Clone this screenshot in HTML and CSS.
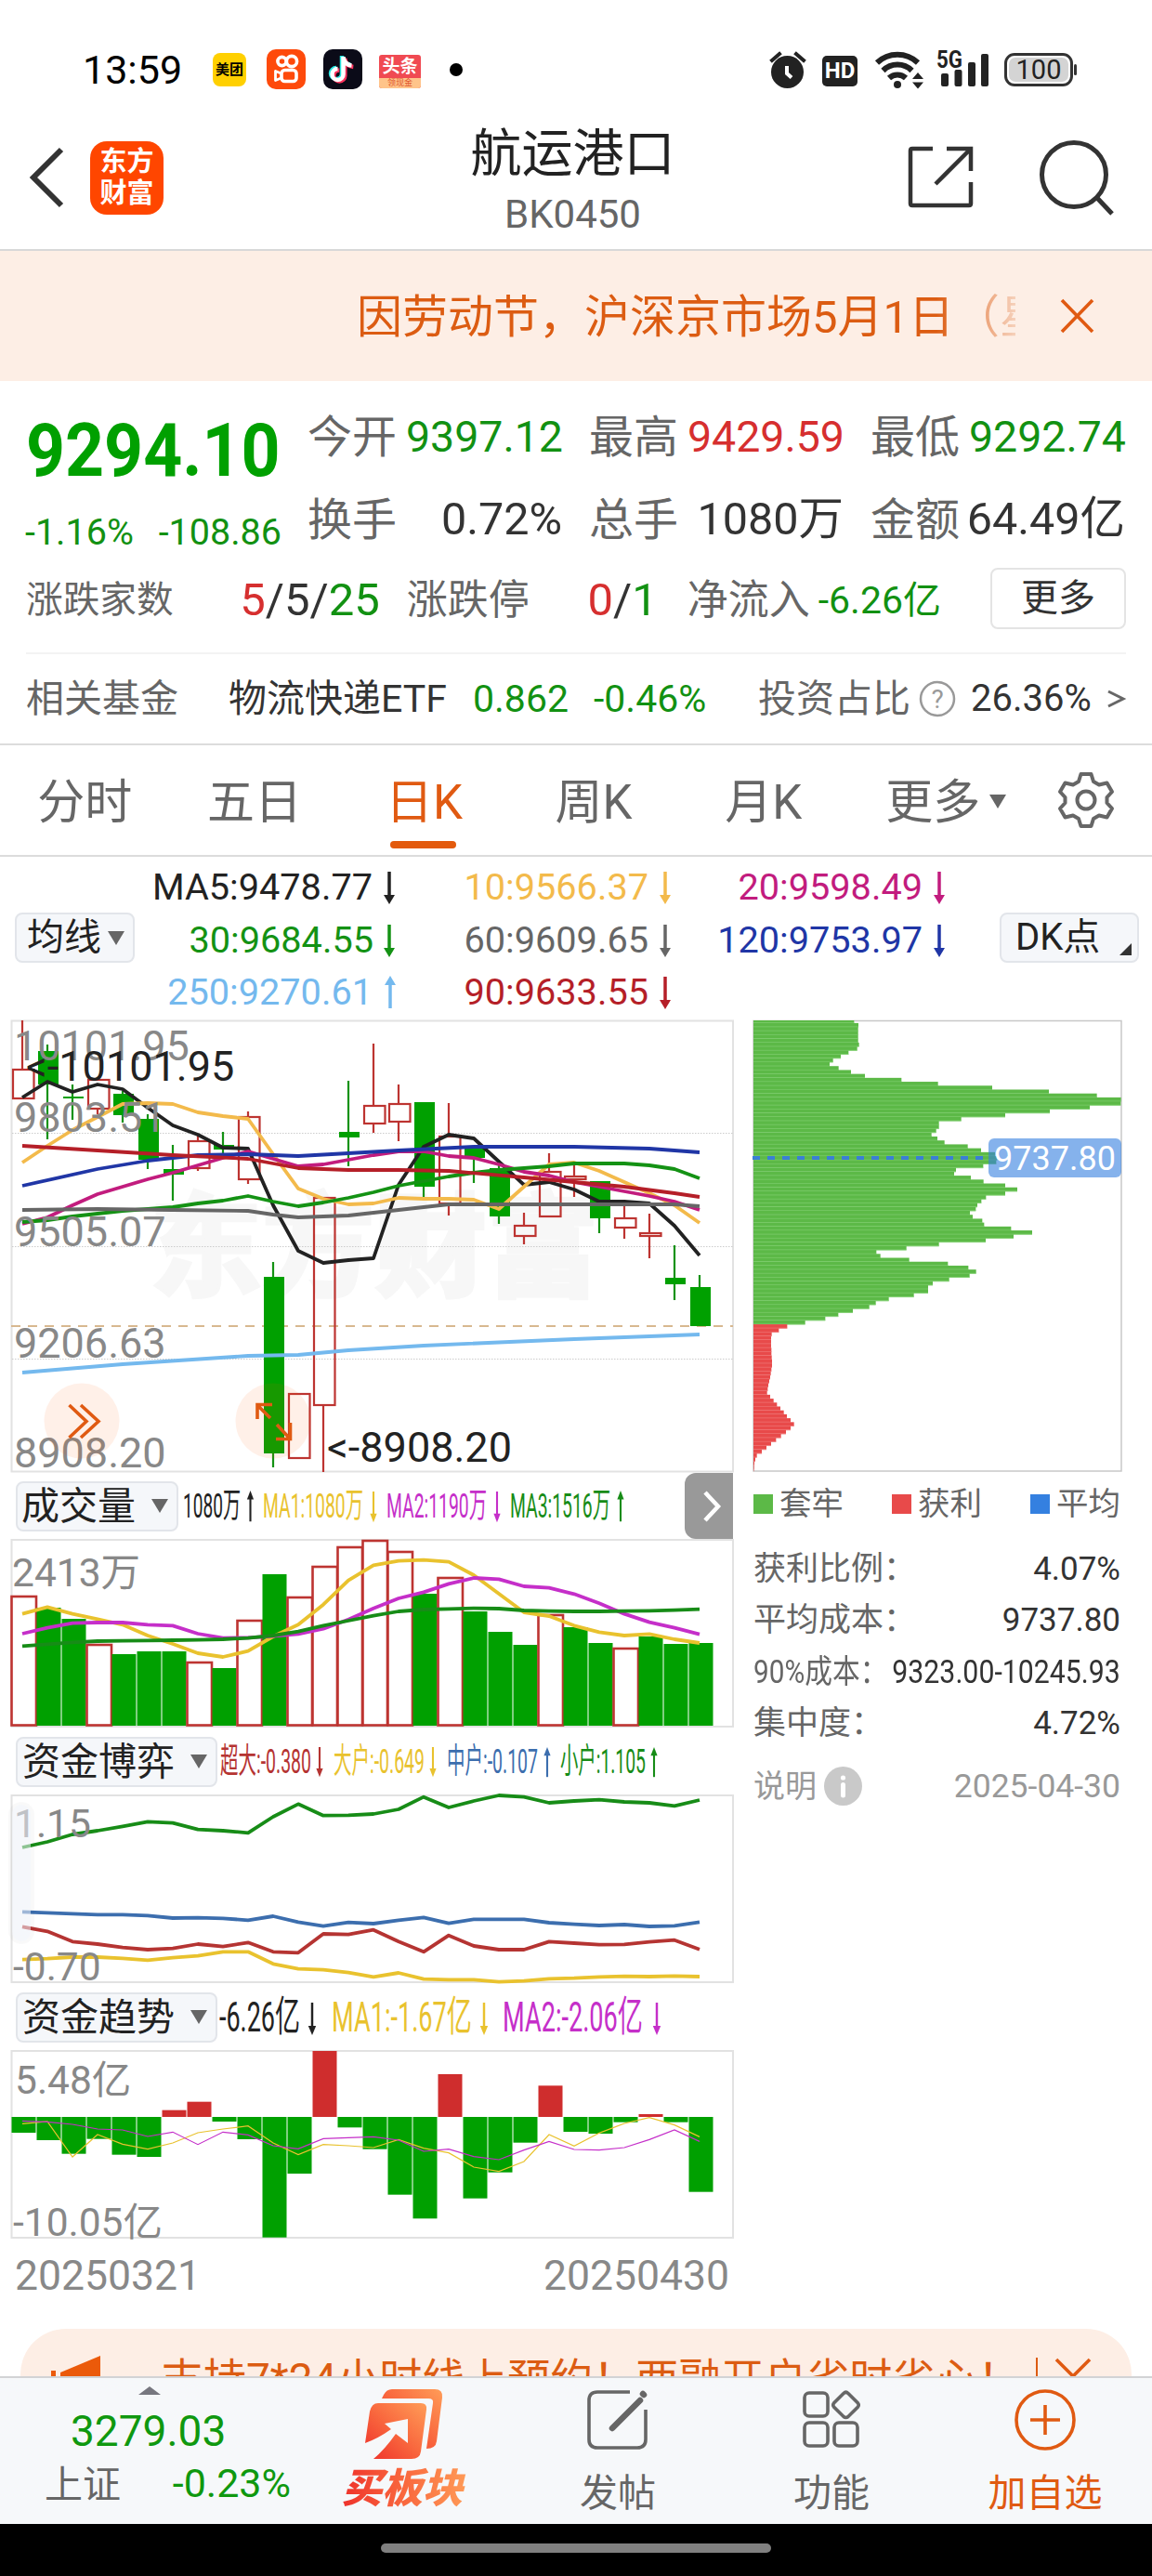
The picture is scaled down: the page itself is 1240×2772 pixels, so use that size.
FILE: index.html
```html
<!DOCTYPE html>
<html lang="zh-CN">
<head>
<meta charset="utf-8">
<title>航运港口 BK0450</title>
<link rel="stylesheet" href="styles.css">
</head>
<body>
<div class="statusbar">
  <span class="clock">13:59</span>
  <span class="app meituan">美团</span>
  <svg class="app-kuaishou" width="42" height="43" viewBox="0 0 42 43"><rect width="42" height="43" rx="10" fill="#fe4a0b"/><g fill="none" stroke="#fff" stroke-width="3.600"><circle cx="16.500" cy="13" r="4.600"/><circle cx="27" cy="13" r="5.600"/><rect x="16" y="22.500" width="16" height="12" rx="3.500"/><path d="M15.500 26l-6-2.500v10l6-2.500" stroke-linejoin="round" stroke-width="2.800"/></g></svg>
  <svg class="app-douyin" width="42" height="43" viewBox="0 0 42 43"><rect width="42" height="43" rx="10" fill="#0b0b18"/><g fill="none" stroke-width="4.500"><path d="M21.500 8v19a6 6 0 1 1-6-6M21.500 9c1 5 4 8 9 8.500" stroke="#25e5e0" transform="translate(-1.500 -1)"/><path d="M21.500 8v19a6 6 0 1 1-6-6M21.500 9c1 5 4 8 9 8.500" stroke="#f9315c" transform="translate(1.800 1.500)"/><path d="M21.500 8v19a6 6 0 1 1-6-6M21.500 9c1 5 4 8 9 8.500" stroke="#fff"/></g></svg>
  <span class="app toutiao"><b>头条</b><i>领现金</i></span>
  <span class="dot"></span>
  <span class="grow"></span>
  <svg width="38" height="42" viewBox="0 0 38 42"><circle cx="18.500" cy="23.500" r="17.500" fill="#222"/><path d="M2 11l8-7M36 11l-8-7" stroke="#222" stroke-width="4" stroke-linecap="square"/><path d="M18 17v8l5 4.500" fill="none" stroke="#fff" stroke-width="4"/></svg>
  <span class="hd">HD</span>
  <svg class="wifi" width="54" height="42" viewBox="0 0 54 42"><g fill="none" stroke="#222" stroke-width="6"><path d="M2 13.500a32 32 0 0 1 44 0"/><path d="M8.500 22a22 22 0 0 1 31 0"/><path d="M15 30a13 13 0 0 1 18 0"/></g><circle cx="24" cy="37" r="4" fill="#222"/><path d="M40 31h12l-6-7zM40 34.500h12l-6 7z" fill="#222"/></svg>
  <svg class="signal" width="56" height="42" viewBox="0 0 56 42"><text x="-1" y="19" class="g5" textLength="28" lengthAdjust="spacingAndGlyphs">5G</text><g fill="#222"><rect x="4" y="25" width="8" height="14" rx="2"/><rect x="18.500" y="21" width="8" height="18" rx="2"/><rect x="33" y="13" width="8" height="26" rx="2"/><rect x="47" y="4" width="8" height="35" rx="2"/></g></svg>
  <span class="battery"><em>100</em></span>
</div>

<header class="topbar">
  <svg class="back" width="40" height="66" viewBox="0 0 40 66"><path d="M36 3L6 33l30 30" fill="none" stroke="#333" stroke-width="6"/></svg>
  <span class="logo">东方<br>财富</span>
  <div class="title"><h1>航运港口</h1><p>BK0450</p></div>
  <svg class="share" width="72" height="72" viewBox="0 0 72 72"><g fill="none" stroke="#333" stroke-width="4.500"><path d="M28 5H6q-2 0-2 2v57q0 2 2 2h61q2 0 2-2V41"/><path d="M43 5h26v24M69 5L31 43"/></g></svg>
  <svg width="82" height="82" viewBox="0 0 82 82"><g fill="none" stroke="#333" stroke-width="5"><circle cx="37" cy="38" r="34.500"/><path d="M61 62l17 18"/></g></svg>
</header>

<div class="notice">
  <span class="notice-text">因劳动节，沪深京市场5月1日（星</span>
  <svg width="38" height="38" viewBox="0 0 38 38"><path d="M2 2l33 34M35 2L2 36" stroke="#e05a12" stroke-width="3.600"/></svg>
</div>

<section class="quote">
  <div class="quote-top">
    <div class="price">
      <strong>9294.10</strong>
      <p><span>-1.16%</span><span>-108.86</span></p>
    </div>
    <dl class="stats">
      <div><dt>今开</dt><dd class="down">9397.12</dd></div>
      <div><dt>最高</dt><dd class="up">9429.59</dd></div>
      <div><dt>最低</dt><dd class="down">9292.74</dd></div>
      <div class="second"><dt>换手</dt><dd>0.72%</dd></div>
      <div class="second"><dt>总手</dt><dd>1080万</dd></div>
      <div class="second"><dt>金额</dt><dd>64.49亿</dd></div>
    </dl>
  </div>
  <div class="breadth">
    <span class="k4">涨跌家数</span><span class="n n1"><i class="up">5</i>/5/<i class="down">25</i></span>
    <span class="k3">涨跌停</span><span class="n n2"><i class="up">0</i>/<i class="down">1</i></span>
    <span class="k3">净流入</span><span class="flow down">-6.26亿</span>
    <button class="more">更多</button>
  </div>
  <div class="fund">
    <span class="muted">相关基金</span><span class="etf">物流快递ETF</span><span class="down nav">0.862</span><span class="down chg">-0.46%</span>
    <span class="muted">投资占比</span>
    <svg width="40" height="40" viewBox="0 0 40 40"><circle cx="20" cy="20" r="18" fill="none" stroke="#999" stroke-width="2.500"/><text x="20" y="29.500" text-anchor="middle" class="q">?</text></svg>
    <span class="ratio">26.36%</span>
    <svg width="20" height="22" viewBox="0 0 20 22"><path d="M1 3l16 8-16 8" fill="none" stroke="#666" stroke-width="3"/></svg>
  </div>
</section>

<nav class="tabs">
  <a>分时</a><a>五日</a><a class="active">日K</a><a>周K</a><a>月K</a><a>更多<i class="caret"></i></a>
  <svg width="62" height="62" viewBox="0 0 62 62"><g fill="none" stroke="#666" stroke-width="4" stroke-linejoin="round"><path d="M25.500 3h11l2.500 8 6 3.500 8.500-2L59 22l-5.500 6v6l5.500 6-5.500 9.500-8.500-2-6 3.500-2.500 8h-11l-2.500-8-6-3.500-8.500 2L3 40l5.500-6v-6L3 22l5.500-9.500 8.500 2 6-3.500z"/><circle cx="31" cy="31" r="9.500"/></g></svg>
</nav>

<section class="averages">
  <button class="pill">均线<i class="caret"></i></button>
  <svg class="ma-legend" width="860" height="168" viewBox="160 925 860 168">
    <defs>
      <g id="dn"><path d="M0 0v27" stroke="currentColor" stroke-width="3.500"/><path d="M-6 25h12l-6 10z" fill="currentColor"/></g>
      <g id="upw"><path d="M0 8v27" stroke="currentColor" stroke-width="3.500"/><path d="M-6 10h12L0 0z" fill="currentColor"/></g>
    </defs>
    <g class="ma">
      <g class="c-ma5"><text x="401" y="968">MA5:9478.77</text><use href="#dn" x="419" y="938"/></g>
      <g class="c-ma10"><text x="698" y="968">10:9566.37</text><use href="#dn" x="716" y="938"/></g>
      <g class="c-ma20"><text x="993" y="968">20:9598.49</text><use href="#dn" x="1011" y="938"/></g>
      <g class="c-ma30"><text x="402" y="1025">30:9684.55</text><use href="#dn" x="419" y="995"/></g>
      <g class="c-ma60"><text x="698" y="1025">60:9609.65</text><use href="#dn" x="716" y="995"/></g>
      <g class="c-ma120"><text x="993" y="1025">120:9753.97</text><use href="#dn" x="1011" y="995"/></g>
      <g class="c-ma250"><text x="401" y="1081">250:9270.61</text><use href="#upw" x="420" y="1050"/></g>
      <g class="c-ma90"><text x="698" y="1081">90:9633.55</text><use href="#dn" x="716" y="1051"/></g>
    </g>
  </svg>
  <button class="pill dk">DK点</button>
</section>

<main class="board">
  <div class="charts">
    <svg width="800" height="489" viewBox="0 1096 800 489">
      <text x="403" y="1385" class="watermark" text-anchor="middle">东方财富</text>
      <rect x="12.500" y="1098.500" width="776.500" height="485" class="frame"/>
      <path d="M13 1219.500h776M13 1341.500h776M13 1462.500h776" class="dots"/>
      <path d="M12 1427h777" class="last"/>
      <g id="candles"></g>
      <g id="averages"></g>
      <g class="axis">
        <text x="15" y="1141">10101.95</text><text x="15" y="1218">9803.51</text><text x="15" y="1341">9505.07</text><text x="15" y="1461">9206.63</text><text x="15" y="1579">8908.20</text>
      </g>
      <g class="mark"><text x="28" y="1162.500">&lt;-10101.95</text><text x="352" y="1573">&lt;-8908.20</text></g>
      <g fill="#f50" fill-opacity=".09"><circle cx="88" cy="1529" r="40.500"/><circle cx="294" cy="1529" r="40.500"/></g>
      <g fill="none" stroke="#e05a12" stroke-width="3.600"><path d="M74.500 1512l18.500 17.500-18.500 17.500M87 1512l19 17.500-19 17.500"/><path d="M277 1527v-15.500h16M278 1513l13 13M297 1548.500h15.500V1531M298 1533l13 14"/></g>
    </svg>

    <div class="indicator">
      <button class="pill">成交量<i class="caret"></i></button>
      <svg width="545" height="70" viewBox="192 1586 545 70" class="vals">
        <g class="s37">
          <g class="k-black"><text x="197" y="1633" textLength="62" lengthAdjust="spacingAndGlyphs">1080万</text><use href="#upw" transform="translate(269.500 1604) scale(.6 .95)"/></g>
          <g class="k-yellow"><text x="283" y="1633" textLength="108" lengthAdjust="spacingAndGlyphs">MA1:1080万</text><use href="#dn" transform="translate(402 1605) scale(.6 .95)"/></g>
          <g class="k-mag"><text x="416" y="1633" textLength="108" lengthAdjust="spacingAndGlyphs">MA2:1190万</text><use href="#dn" transform="translate(535 1605) scale(.6 .95)"/></g>
          <g class="k-green"><text x="549" y="1633" textLength="108" lengthAdjust="spacingAndGlyphs">MA3:1516万</text><use href="#upw" transform="translate(668 1604) scale(.6 .95)"/></g>
        </g>
      </svg>
      <span class="fold"><svg width="20" height="36" viewBox="0 0 20 36"><path d="M2 3l14 15L2 33" fill="none" stroke="#fff" stroke-width="4.500"/></svg></span>
    </div>
    <svg width="800" height="204" viewBox="0 1656 800 204">
      <rect x="12.500" y="1657" width="776.500" height="201" class="frame"/>
      <g class="axis sm"><text x="13" y="1707">2413万</text></g>
      <g id="volume"></g>
    </svg>

    <div class="indicator">
      <button class="pill wide">资金博弈<i class="caret"></i></button>
      <svg width="500" height="70" viewBox="234 1861 500 70" class="vals">
        <g class="s37">
          <g class="k-red"><text x="237" y="1908" textLength="98" lengthAdjust="spacingAndGlyphs">超大:-0.380</text><use href="#dn" transform="translate(344 1880) scale(.6 .92)"/></g>
          <g class="k-yellow"><text x="359" y="1908" textLength="98" lengthAdjust="spacingAndGlyphs">大户:-0.649</text><use href="#dn" transform="translate(466 1880) scale(.6 .92)"/></g>
          <g class="k-blue"><text x="481" y="1908" textLength="98" lengthAdjust="spacingAndGlyphs">中户:-0.107</text><use href="#upw" transform="translate(589 1880) scale(.6 .92)"/></g>
          <g class="k-green"><text x="603" y="1908" textLength="92" lengthAdjust="spacingAndGlyphs">小户:1.105</text><use href="#upw" transform="translate(704 1880) scale(.6 .92)"/></g>
        </g>
      </svg>
    </div>
    <svg width="800" height="204" viewBox="0 1931 800 204">
      <rect x="12.500" y="1932" width="776.500" height="201" class="frame"/>
      <g id="game"></g>
      <g class="axis sm"><text x="15" y="1977">1.15</text><text x="14" y="2130.500">-0.70</text></g>
      <rect x="9" y="1939" width="28" height="153" rx="14" fill="#000" fill-opacity=".025"/>
      <rect x="13" y="1942" width="20" height="147" rx="10" fill="#f3f6fe" fill-opacity=".55"/>
    </svg>

    <div class="indicator">
      <button class="pill wide">资金趋势<i class="caret"></i></button>
      <svg width="500" height="70" viewBox="234 2136 500 70" class="vals">
        <g class="s46">
          <g class="k-black"><text x="236" y="2186" textLength="87" lengthAdjust="spacingAndGlyphs">-6.26亿</text><use href="#dn" transform="translate(336 2155) scale(.7 1)"/></g>
          <g class="k-yellow"><text x="357" y="2186" textLength="151" lengthAdjust="spacingAndGlyphs">MA1:-1.67亿</text><use href="#dn" transform="translate(521 2155) scale(.7 1)"/></g>
          <g class="k-mag"><text x="541" y="2186" textLength="151" lengthAdjust="spacingAndGlyphs">MA2:-2.06亿</text><use href="#dn" transform="translate(707 2155) scale(.7 1)"/></g>
        </g>
      </svg>
    </div>
    <svg width="800" height="204" viewBox="0 2206 800 204">
      <rect x="12.500" y="2207" width="776.500" height="201" class="frame"/>
      <g class="axis sm"><text x="16" y="2253">5.48亿</text><text x="14" y="2405.500">-10.05亿</text></g>
      <g id="trend"></g>
    </svg>
    <div class="dates"><span>20250321</span><span>20250430</span></div>
  </div>

  <aside class="chips">
    <svg width="440" height="489" viewBox="800 1096 440 489">
      <rect x="811" y="1098.500" width="396" height="484.500" fill="none" stroke="#c8c8c8" stroke-width="1.500"/>
      <g id="chips"></g>
      <path d="M810 1246h254" stroke="#3a7fd5" stroke-width="4" stroke-dasharray="8 8"/>
      <rect x="1064" y="1225" width="143" height="42" rx="6" fill="#347fe0" fill-opacity=".6"/>
      <text x="1070" y="1258.500" class="avg">9737.80</text>
    </svg>
    <ul class="key"><li><i class="sq trapped"></i>套牢</li><li><i class="sq gain"></i>获利</li><li><i class="sq mean"></i>平均</li></ul>
    <dl>
      <div><dt>获利比例：</dt><dd>4.07%</dd></div>
      <div><dt>平均成本：</dt><dd>9737.80</dd></div>
      <div class="tight"><dt>90%成本：</dt><dd>9323.00-10245.93</dd></div>
      <div><dt>集中度：</dt><dd>4.72%</dd></div>
    </dl>
    <div class="note"><span>说明</span><svg width="41" height="42" viewBox="0 0 41 42"><ellipse cx="20.500" cy="21" rx="20.500" ry="21" fill="#c9c9c9"/><path d="M20.500 19.500v11.500" stroke="#fff" stroke-width="5" stroke-linecap="round"/><circle cx="20.500" cy="12" r="2.600" fill="#fff"/></svg><time>2025-04-30</time></div>
  </aside>
</main>

<div class="promo">
  <svg width="54" height="40" viewBox="0 0 54 40"><path d="M10 18L53 0v40L10 32zM0 16h5v20H0z" fill="#eb5a0a"/></svg>
  <span class="promo-text">支持7*24小时线上预约！两融开户省时省心！</span>
  <i class="bar"></i>
  <svg class="x" width="38" height="38" viewBox="0 0 38 38"><path d="M1 1l36 36M37 1L1 37" stroke="#e05a12" stroke-width="3.600"/></svg>
</div>

<footer class="dock">
  <div class="index"><i class="tri"></i><b>3279.03</b><p><span>上证</span><em>-0.23%</em></p></div>
  <a class="buy">
    <svg width="84" height="76" viewBox="0 0 84 76">
      <defs><linearGradient id="g" x1="0" y1="1" x2="1" y2="0"><stop offset="0" stop-color="#ee2f2a"/><stop offset=".5" stop-color="#f9683e"/><stop offset="1" stop-color="#ff9d58"/></linearGradient></defs>
      <path d="M29 0h46q9 0 8 9l-6 47q-1 8-11 8l7-49q1-5-5-5H18l2-4q3-6 9-6z" fill="url(#g)"/>
      <path d="M14 15h46q7 0 6 7l-6 45q-1 8-10 8H9q12-10 24-27l13 10V32l-25 5 7 6Q14 53 0 58L5 24q2-9 9-9z" fill="url(#g)"/>
    </svg>
    <span>买板块</span></a>
  <a><svg width="66" height="66" viewBox="0 0 66 66"><path d="M46 3H11q-9 0-9 9v42q0 9 9 9h43q9 0 9-9V22" fill="none" stroke="#666" stroke-width="3.600"/><path d="M57 12L27 42M60 5l1 1" stroke="#666" stroke-width="6.500" stroke-linecap="round"/></svg><span>发帖</span></a>
  <a><svg width="64" height="66" viewBox="0 0 64 66"><g fill="none" stroke="#666" stroke-width="3.600"><rect x="3" y="4" width="25" height="25" rx="5"/><rect x="3" y="36" width="25" height="25" rx="5"/><rect x="35" y="36" width="25" height="25" rx="5"/><path d="M45 4.500q2.500-2.500 5 0L60.500 15q1.500 2 0 4L50 29.500q-2.500 2-5 0L34.500 19q-1.500-2 0-4z"/></g></svg><span>功能</span></a>
  <a class="add"><svg width="66" height="66" viewBox="0 0 66 66"><g fill="none" stroke="#e05a12" stroke-width="3.600"><circle cx="33" cy="33" r="31"/><path d="M33 17v32M17 33h32"/></g></svg><span>加自选</span></a>
</footer>
<div class="sysbar"><i></i></div>
<script src="charts.js"></script>
</body>
</html>
```
FILE: styles.css
```css
* { box-sizing: border-box; }
body, h1, p, dl, dd, ul { margin: 0; padding: 0; }
body {
  width: 1240px;
  background: #fff;
  color: #333;
  font-family: Roboto, "Noto Sans CJK SC", sans-serif;
  font-size: 40px;
  overflow-x: hidden;
}
i, em { font-style: normal; }
svg { display: block; flex: none; overflow: visible; }
span, dt, dd, a, button { white-space: nowrap; }
button { font: inherit; color: inherit; padding: 0; }
.up { color: #d62f2f; }
.down { color: #129112; }
.grow { flex: 1; }

/* status bar */
.statusbar { display: flex; align-items: center; height: 110px; padding: 39px 81px 0 89px; color: #000; }
.clock { font-size: 43px; line-height: 50px; width: 140px; }
.app { display: flex; align-items: center; justify-content: center; flex: none; }
.meituan { width: 36px; height: 36px; border-radius: 8px; background: #ffd000; font-size: 15px; font-weight: 700; margin-right: 22px; line-height: 20px; }
.app-kuaishou { margin-right: 19px; }
.app-douyin { margin-right: 18px; }
.toutiao { flex-direction: column; justify-content: flex-start; width: 45px; height: 36px; margin-top: 4px; background: #f04a52; color: #fff; font-size: 19px; line-height: 25px; border-radius: 3px; }
.toutiao b { height: 25px; }
.toutiao i { width: 45px; height: 11px; background: #ffc48a; color: #e0552c; font-size: 9px; line-height: 11px; text-align: center; border-radius: 0 0 3px 3px; }
.dot { width: 14px; height: 14px; border-radius: 50%; background: #000; margin-left: 31px; }
.hd { width: 38px; height: 33px; border-radius: 5px; background: #222; color: #fff; font-size: 24px; font-weight: 700; line-height: 33px; text-align: center; margin: 3px 19px 0 18px; }
.wifi { margin-right: 13px; }
.signal { margin-right: 16px; }
.g5 { font-size: 25px; font-weight: 700; fill: #222; }
.battery { position: relative; width: 74px; height: 36px; border: 3px solid #333; border-radius: 11px; padding: 2px; margin-right: 4px; }
.battery::after { content: ""; position: absolute; right: -7px; top: 9px; width: 3px; height: 12px; background: #333; border-radius: 2px; }
.battery em { display: block; height: 26px; background: #d4d4d4; border-radius: 7px; font-size: 29px; line-height: 27px; text-align: center; color: #222; }

/* title bar */
.topbar { display: flex; align-items: center; height: 160px; padding: 4px 39px 0 30px; border-bottom: 2px solid #d8d8d8; }
.logo { width: 79px; height: 79px; margin-left: 27px; border-radius: 18px; background: #ff4600; color: #fff; font-size: 29px; font-weight: 700; line-height: 34px; text-align: center; padding-top: 5px; }
.title { flex: 1; text-align: center; padding: 8px 0 0 80px; margin-right: -1px; }
.title h1 { font-size: 55px; font-weight: 400; line-height: 62px; color: #222; }
.title p { font-size: 42px; line-height: 50px; color: #666; margin-top: 10px; }
.share { margin: 0 71px 0 0; }

/* notice */
.notice { display: flex; align-items: center; height: 140px; background: #fdeee5; padding-left: 384px; color: #dc5c12; }
.notice-text { width: 709px; overflow: hidden; font-size: 49px; line-height: 70px; margin: 3px 48px 0 0; -webkit-mask-image: linear-gradient(90deg, #000 88%, transparent 103%); mask-image: linear-gradient(90deg, #000 88%, transparent 103%); }

/* quote */
.quote { height: 392px; border-bottom: 2px solid #dcdcdc; }
.quote-top { display: flex; height: 201px; padding: 30px 28px 0 27px; }
.price { width: 305px; color: #00a000; }
.price strong { display: block; font-size: 79px; font-weight: 700; line-height: 90px; margin-left: 1px; transform: scaleX(.928); transform-origin: left; }
.price p { display: flex; justify-content: space-between; width: 276px; font-size: 39.500px; line-height: 50px; margin-top: 18px; color: #129112; }
.stats { display: grid; grid-template-columns: repeat(3, 274px); column-gap: 29px; row-gap: 28px; align-content: start; }
.stats div { display: flex; justify-content: space-between; line-height: 60px; }
.stats dt { font-size: 48px; color: #666; margin-left: -1px; padding-top: 1px; }
.stats dd { font-size: 46.500px; }
.stats .second dd { font-size: 48.500px; }
.stats .second { margin-right: 1px; }
.breadth { display: flex; align-items: center; height: 66px; padding: 0 28px; line-height: 60px; }
.breadth .n { font-size: 49px; padding-top: 4px; text-align: right; }
.breadth > span { padding-top: 3px; }
.k4 { font-size: 39.700px; color: #666; }
.n1 { width: 222px; margin-right: 29px; }
.k3 { font-size: 44px; color: #666; }
.n2 { width: 138px; margin-right: 32px; }
.flow { font-size: 41px; margin-left: 9px; }
.more { margin-left: auto; width: 146px; height: 66px; border: 2px solid #e4e4e4; border-radius: 8px; background: #fff; font-size: 40px; line-height: 60px; }
.fund { display: flex; align-items: center; height: 98px; margin: 25px 28px 0; border-top: 2px solid #f3f3f3; font-size: 41px; line-height: 60px; }
.muted { color: #666; }
.etf { width: 263px; margin-left: 54px; }
.nav { width: 130px; }
.chg { width: 177px; }
.fund svg { margin-left: 9px; }
.q { font-size: 28px; fill: #999; }
.ratio { margin: 0 6px 0 16px; font-size: 40px; width: 132px; }

/* period tabs */
.tabs { display: flex; align-items: center; height: 120px; border-bottom: 2px solid #dcdcdc; color: #666; font-size: 51px; }
.tabs a { position: relative; width: 182.600px; height: 118px; line-height: 124px; text-align: center; }
.tabs .active { color: #e05a12; }
.tabs .active::after { content: ""; position: absolute; left: 55px; top: 103px; width: 71px; height: 8px; border-radius: 4px; background: #e35a0c; }
.tabs .caret { position: absolute; left: 152px; top: 53px; }
.tabs svg { margin-left: 42px; }
.caret { display: inline-block; border: 9px solid transparent; border-top: 15px solid #666; border-bottom: 0; }

/* averages legend */
.averages { display: flex; align-items: center; height: 174px; padding-left: 16px; }
.pill { display: flex; align-items: center; justify-content: space-between; flex: none; width: 129px; height: 54px; padding: 0 9px 0 11px; border: 2px solid #e2e5ea; border-radius: 8px; background: #f5f7fa; color: #222; font-size: 40px; line-height: 50px; }
.ma-legend { margin: 0 56px 0 15px; }
.dk { position: relative; width: 150px; padding-left: 15px; }
.dk::after { content: ""; position: absolute; right: 6px; bottom: 6px; border-left: 13px solid transparent; border-bottom: 13px solid #333; }
.ma text { font-size: 39.700px; text-anchor: end; fill: currentColor; }
.c-ma5 { color: #222; } .c-ma10 { color: #f3ba4b; } .c-ma20 { color: #c21c7e; }
.c-ma30 { color: #149214; } .c-ma60 { color: #666; } .c-ma120 { color: #2036a6; }
.c-ma250 { color: #74b9ee; } .c-ma90 { color: #b51f28; }

/* charts */
.board { display: flex; height: 1410px; }
.charts { width: 800px; }
.frame { fill: none; stroke: #e2e2e2; stroke-width: 2; }
.dots { fill: none; stroke: #ccc; stroke-width: 1; stroke-dasharray: 1.500 1.500; }
.last { stroke: #d8b890; stroke-width: 2; stroke-dasharray: 10 8; }
.watermark { font-size: 121px; font-weight: 900; fill: #f7f7f7; stroke: #f7f7f7; stroke-width: 3; }
.axis { font-size: 45px; fill: #888; }
.axis.sm { font-size: 42.500px; }
.mark { font-size: 45px; fill: #222; }
.line { fill: none; stroke: currentColor; stroke-width: 3.800; stroke-linejoin: round; }
.thin { fill: none; stroke: currentColor; stroke-width: 1.200; }
.green { fill: #00a000; }
.red-fill { fill: #cf2d2d; }
.red-box { fill: none; stroke: #bd3431; stroke-width: 2.200; }
.vol-box { fill: #fff; stroke: #bd3431; stroke-width: 2.600; }
.wick-g { stroke: #149214; stroke-width: 2.200; }
.wick-r { stroke: #bd3431; stroke-width: 2.200; }
.indicator { display: flex; align-items: center; height: 71px; padding-left: 17px; }
.indicator .pill { width: 175px; padding: 0 9px 0 4px; font-size: 41px; }
.indicator .wide { width: 217px; padding-left: 5px; }
.vals text { fill: currentColor; }
.s37 { font-size: 37px; }
.s46 { font-size: 45px; }
.k-black { color: #222; } .k-yellow { color: #e9c22e; } .k-mag { color: #c52fc9; }
.k-green { color: #178c17; } .k-red { color: #b53432; } .k-blue { color: #3c6eae; }
.fold { display: flex; align-items: center; width: 52px; height: 71px; padding-left: 20px; background: #999; border-radius: 12px 0 0 12px; }
.dates { display: flex; justify-content: space-between; height: 76px; padding: 0 15px 0 16px; color: #888; font-size: 44.500px; line-height: 78px; }

/* cost distribution */
.chips { width: 440px; }
.avg { font-size: 36px; fill: #fff; }
.green-bar { fill: #5cb947; }
.red-bar { fill: #e84a4a; }
.seam-g { stroke: #86d277; stroke-width: 1; }
.seam-r { stroke: #f08080; stroke-width: 1; }
.key { display: flex; justify-content: space-between; list-style: none; height: 66px; padding: 0 34px 0 11px; color: #666; font-size: 34.500px; line-height: 69px; }
.key li { display: flex; align-items: center; }
.sq { width: 21px; height: 21px; margin-right: 7px; }
.trapped { background: #5cb947; } .gain { background: #e84a4a; } .mean { background: #3480e0; }
.chips dl { padding: 9px 34px 0 11px; }
.chips dl div { display: flex; justify-content: space-between; height: 55.300px; line-height: 57px; font-size: 35px; }
.chips dt { color: #666; }
.tight dt { transform: scaleX(.85); transform-origin: left; }
.tight dd { transform: scaleX(.865); transform-origin: right; margin-left: -60px; }
.note { display: flex; align-items: center; height: 54px; margin-top: 14px; padding: 0 34px 0 11px; color: #999; font-size: 34px; line-height: 56px; }
.note svg { margin-left: 8px; }
.note time { margin-left: auto; font-size: 35.500px; }

/* promo strip */
.promo { display: flex; height: 51px; overflow: hidden; margin: 0 22px; padding-left: 33px; border-radius: 49px 49px 0 0; background: #fdeee5; color: #dc5c12; }
.promo > svg { margin-top: 29px; }
.promo-text { flex: none; width: 930px; margin: 20px 0 0 64px; font-size: 46px; line-height: 68px; }
.promo .bar { flex: none; width: 2px; height: 40px; margin: 31px 19px 0 12px; background: #dc5c12; }
.promo .x { margin-top: 32px; }

/* bottom dock */
.dock { display: flex; height: 159px; background: #f6f8fa; border-top: 2px solid #d2d3d5; color: #666; font-size: 41px; }
.dock a { display: flex; flex-direction: column; align-items: center; width: 230px; padding-top: 12px; }
.dock a span { line-height: 50px; margin-top: 21px; }
.index { width: 320px; color: #0f980f; }
.index b { display: block; font-size: 46px; font-weight: 400; line-height: 54px; padding-left: 76px; margin-top: 12px; }
.index p { display: flex; line-height: 50px; padding: 3px 7px 0 48px; justify-content: space-between; }
.index p span { color: #666; padding-top: 3px; }
.index em { font-size: 43px; padding-top: 1px; }
.tri { display: block; width: 0; margin: 9px 0 0 149px; border: 12px solid transparent; border-top: 0; border-bottom: 9px solid #77777f; }
.dock .buy span { margin: 7px 0 0; font-size: 43.500px; font-weight: 900; font-style: italic; line-height: 50px; padding: 0 8px 0 4px; background: linear-gradient(90deg, #ee2f2a, #f9683e 50%, #ff9d58); -webkit-background-clip: text; background-clip: text; color: transparent; }
.dock .add { color: #e05a12; }
.sysbar { height: 56px; background: #000; padding-top: 21px; }
.sysbar i { display: block; width: 420px; height: 10px; margin: 0 auto; border-radius: 5px; background: #808080; }
```
FILE: charts.js
```js
const STEP = 27, X0 = 24;
const put = (id, markup) => { document.getElementById(id).innerHTML = markup; };
const path = (pts) => 'M' + pts.map(p => p.join(' ')).join('L');
const series = (ys, cls, top = 0, k = 1) =>
  `<path class="${cls}" d="${path(ys.map((y, i) => [X0 + STEP * i, top + y / k]))}"/>`;
const sparse = (pts, cls) =>
  `<path class="${cls}" d="${path(pts.map(([i, y]) => [X0 + STEP * i, y]))}"/>`;

// [rising, high, body top, body bottom, low]
const candles = [
  [1,1098,1151,1182,1182],[0,1124,1131,1167,1226],[0,1167,1180,1182,1205],[1,1162,1162,1193,1199],
  [0,1174,1177,1200,1208],[0,1199,1204,1248,1258],[0,1232,1258,1264,1292],[1,1221,1228,1257,1260],
  [0,1218,1232,1237,1242],[1,1196,1202,1269,1274],[0,1358,1374,1564,1579],[1,1500,1500,1569,1569],
  [1,1289,1289,1512,1584],[0,1163,1218,1224,1255],[1,1123,1190,1209,1219],[1,1167,1188,1207,1228],
  [0,1186,1186,1277,1292],[1,1187,1223,1295,1308],[0,1233,1233,1246,1273],[0,1253,1257,1309,1317],
  [1,1305,1319,1330,1339],[1,1241,1261,1309,1309],[1,1253,1266,1269,1288],[0,1271,1271,1311,1327],
  [1,1291,1311,1321,1333],[1,1306,1327,1330,1354],[0,1340,1375,1382,1399],[0,1372,1385,1427,1427]
];
put('candles', candles.map(([up, h, t, b, l], i) => {
  const c = X0 + STEP * i, w = up ? 'wick-r' : 'wick-g';
  const body = up
    ? `<rect class="red-box" x="${c - 10}" y="${t}" width="22.500" height="${b - t}"/>`
    : `<rect class="green" x="${c - 10}" y="${t}" width="22" height="${b - t}"/>`;
  return `<path class="${w}" d="M${c} ${h}V${t}M${c} ${b}V${l}"/>` + body;
}).join(''));

put('averages',
  series([1181,1164,1175,1167,1172,1192,1211,1221,1235,1236,1297,1346,1359,1356,1354,1275,1234,1221,1225,1250,1275,1272,1280,1293,1293,1295,1319,1351], 'line c-ma5') +
  series([1251,1233,1216,1202,1188,1187,1188,1197,1201,1204,1242,1279,1290,1296,1295,1289,1290,1290,1291,1301,1277,1253,1251,1260,1272,1284,1297,1316], 'line c-ma10') +
  series([1317,1310,1297,1285,1277,1269,1262,1254,1246,1239,1247,1255,1253,1248,1243,1239,1239,1244,1246,1253,1261,1265,1272,1277,1282,1287,1293,1302], 'line c-ma20') +
  series([1315,1313,1309,1306,1303,1301,1299,1295,1292,1287,1293,1298,1294,1289,1283,1276,1271,1266,1262,1259,1257,1255,1252,1252,1252,1254,1258,1268], 'line c-ma30') +
  sparse([[0,1302],[3,1301],[6,1302],[9,1303],[10,1307],[11,1310],[13,1308],[15,1302],[17,1296],[20,1296],[26,1296],[27,1298]], 'line c-ma60') +
  sparse([[0,1276],[3,1258],[5,1249],[7,1243],[9,1242],[11,1244],[13,1241],[15,1238],[18,1234],[22,1234],[25,1236],[27,1240]], 'line c-ma120') +
  sparse([[0,1477],[4,1468],[9,1459],[11,1458],[13,1453],[16,1448],[22,1441],[25,1438],[27,1436]], 'line c-ma250') +
  sparse([[0,1233],[3,1238],[6,1243],[9,1247],[10,1252],[11,1257],[13,1259],[15,1259],[17,1260],[20,1267],[22,1272],[24,1277],[26,1284],[27,1288]], 'line c-ma90'));

// traded volume; rising days are outlined
const volume = [1717,1730,1742,1769,1780,1777,1777,1788,1795,1743,1694,1718,1685,1664,1657,1669,1715,1697,1734,1756,1770,1737,1751,1768,1773,1761,1769,1768];
const rising = new Set([0,3,7,9,11,12,13,14,15,17,21,24]);
put('volume', volume.map((y, i) => {
  const x = 12.5 + STEP * i;
  return rising.has(i)
    ? `<rect class="vol-box" x="${x}" y="${y + 1}" width="26.500" height="${1855.500 - y}"/>`
    : `<rect class="green" x="${x}" y="${y}" width="26" height="${1857 - y}"/>`;
}).join('') +
  series([470,448,470,487,505,540,567,597,609,590,543,505,440,362,313,299,296,302,345,405,465,477,508,529,540,535,552,564], 'line k-yellow', 1580, 3) +
  series([534,515,500,498,498,505,508,534,548,547,542,535,518,488,452,420,400,373,354,358,381,386,406,436,470,497,515,536], 'line k-mag', 1580, 3) +
  series([574,568,562,558,557,556,555,554,552,548,540,527,508,492,476,462,456,454,452,453,459,461,462,462,461,460,458,455], 'line k-green', 1580, 3));

put('game',
  series([384,366,342,330,316,301,305,326,330,337,285,244,281,280,276,261,221,255,234,216,221,240,234,230,237,240,250,231], 'line k-green', 1860, 3) +
  series([592,595,598,601,601,604,612,611,613,619,606,625,638,626,630,619,610,629,616,616,616,627,632,636,633,639,637,625], 'line k-blue', 1860, 3) +
  series([640,655,688,696,707,714,710,696,704,691,721,724,663,665,650,688,721,668,702,714,714,688,693,698,697,689,683,713], 'line k-red', 1860, 3) +
  series([746,743,738,738,742,748,740,734,721,721,760,776,779,788,802,789,809,811,811,818,815,808,806,802,800,801,799,801], 'line k-yellow', 1860, 3));

// net inflow around the zero line
const ZERO = 2278;
put('trend', [405,429,473,425,476,483,332,305,369,426,743,537,141,388,458,605,682,216,617,533,437,253,402,408,371,345,371,596].map((v, i) => {
  const y = 2160 + v / 3, x = 12.5 + STEP * i;
  return y < ZERO
    ? `<rect class="red-fill" x="${x}" y="${y}" width="26" height="${ZERO - y}"/>`
    : `<rect class="green" x="${x}" y="${ZERO}" width="26" height="${y - ZERO}"/>`;
}).join('') +
  series([376,369,483,411,442,458,438,405,393,383,438,476,443,447,453,427,455,470,516,530,498,411,448,406,375,356,380,418], 'thin k-yellow', 2160, 3) +
  series([367,370,378,393,396,417,403,443,403,412,447,457,424,421,418,429,465,458,482,492,461,433,459,461,453,427,396,433], 'thin k-mag', 2160, 3));

// holding cost distribution, one bar per price level
const trapped = [388,402,401,401,401,401,404,398,370,345,320,309,338,378,423,541,659,834,1017,1172,1250,1249,1149,1020,876,734,662,662,653,638,657,680,755,798,843,850,847,805,717,711,765,806,876,915,876,814,799,786,781,762,771,802,808,895,963,903,813,662,557,460,473,566,691,757,782,761,695,642,627,627,581,500,458,437,384,337,295,230];
const gain = [172,145,122,120,120,120,121,121,122,123,123,121,119,117,114,111,109,107,117,128,139,150,161,171,183,194,183,168,152,136,120,105,90,74,69,66,65,64];
put('chips', trapped.concat(gain).map((r, k) => {
  const y = Math.max(1098, 1096.7 + 4.21 * k), end = Math.min(1583, 1096.7 + 4.21 * (k + 1));
  const w = (r - 63) / 3, g = k < trapped.length;
  return `<rect class="${g ? 'green-bar' : 'red-bar'}" x="811" y="${y}" width="${w}" height="${end - y}"/>` +
    `<path class="${g ? 'seam-g' : 'seam-r'}" d="M811 ${end}h${w}"/>`;
}).join(''));
```
